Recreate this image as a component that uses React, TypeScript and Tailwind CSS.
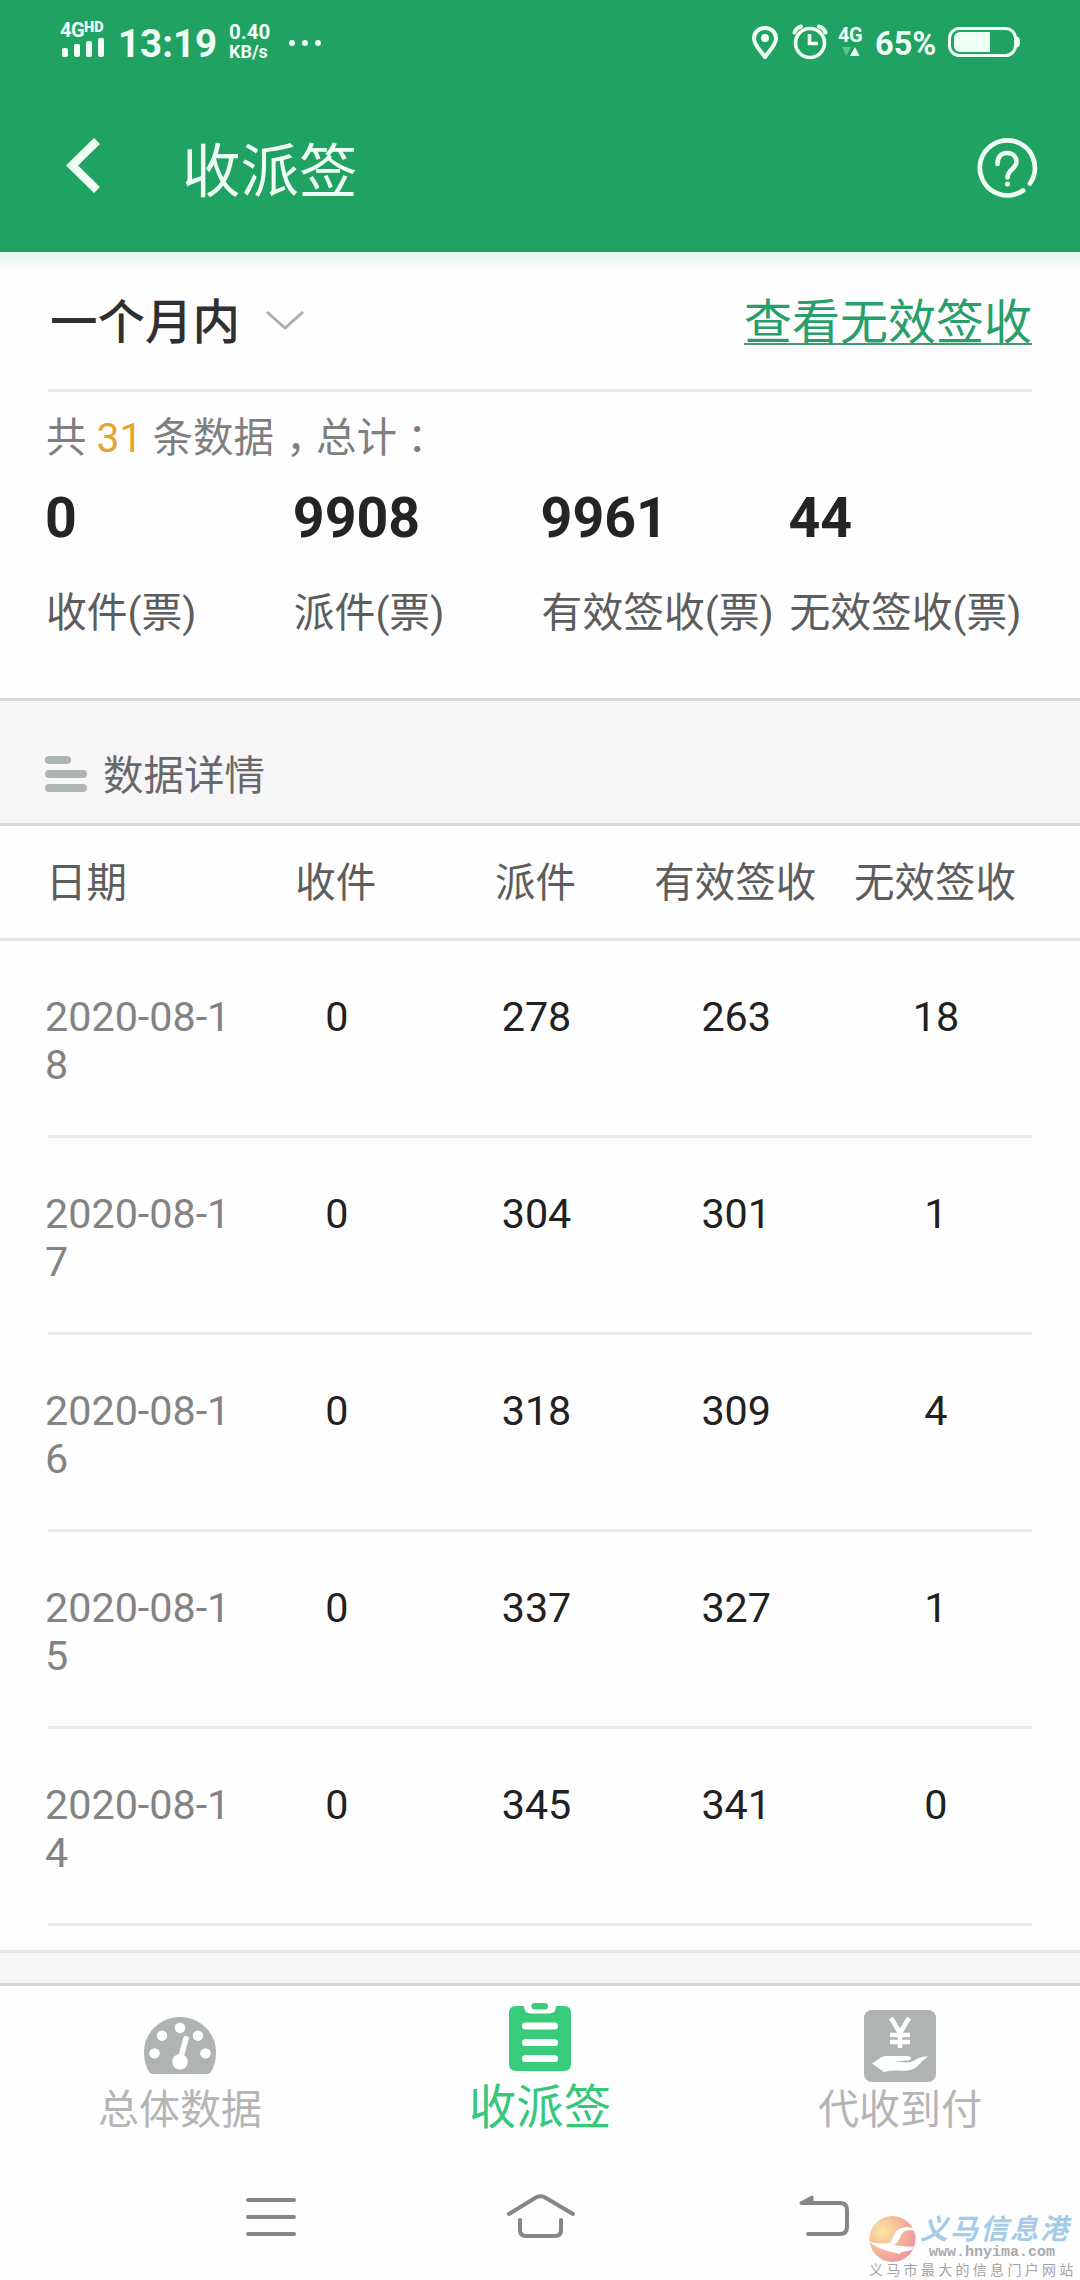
import type { ReactNode } from "react";

const summary = [
  { value: "0", label: "收件(票)" },
  { value: "9908", label: "派件(票)" },
  { value: "9961", label: "有效签收(票)" },
  { value: "44", label: "无效签收(票)" },
];

const rows = [
  ["2020-08-18", "0", "278", "263", "18"],
  ["2020-08-17", "0", "304", "301", "1"],
  ["2020-08-16", "0", "318", "309", "4"],
  ["2020-08-15", "0", "337", "327", "1"],
  ["2020-08-14", "0", "345", "341", "0"],
];

function StatusBar() {
  return (
    <div className="flex h-[86px] items-start justify-between pl-[60px] pr-[60px] font-bold leading-none text-[#f0fff6]">
      <div className="flex">
        <div className="mt-[20px] w-[58px]">
          <div className="flex h-[18px] items-start leading-none">
            <span className="text-[20px] leading-[20px] tracking-[-0.5px]">4G</span>
            <span className="mt-[1px] text-[14.500px] font-black leading-[13px]">HD</span>
          </div>
          <div className="ml-[2px] flex h-[19px] items-end gap-[6px]">
            <i className="h-[9px] w-[6px] rounded-[2px] bg-current" />
            <i className="h-[13px] w-[6px] rounded-[2px] bg-current" />
            <i className="h-[16px] w-[6px] rounded-[2px] bg-current" />
            <i className="h-[19px] w-[6px] rounded-[2px] bg-current" />
          </div>
        </div>
        <span className="mt-[24px] w-[111px] text-[38.5px] leading-[40px]">13:19</span>
        <div className="mt-[23px] w-[60px]">
          <div className="text-[20.500px] leading-[19px]">0.40</div>
          <div className="text-[18px] font-bold leading-[20px]">KB/s</div>
        </div>
        <div className="mt-[40px] flex gap-[7px]">
          <i className="size-[6px] rounded-full bg-current" />
          <i className="size-[6px] rounded-full bg-current" />
          <i className="size-[6px] rounded-full bg-current" />
        </div>
      </div>
      <div className="flex">
        <svg className="mt-[24px] h-[38px] w-[41px]" viewBox="0 0 41 38" fill="none">
          <path d="M14 4C7.500 4 3 8.500 3 14.500c0 6.500 6.500 12 11 18.500 4.500-6.500 11-12 11-18.500C25 8.500 20.500 4 14 4Z" stroke="currentColor" strokeWidth="4" strokeLinejoin="round" />
          <circle cx="14" cy="14" r="4" fill="currentColor" />
        </svg>
        <svg className="mt-[24px] h-[38px] w-[46px]" viewBox="0 0 46 38" fill="none" stroke="currentColor">
          <circle cx="18" cy="19" r="14.500" strokeWidth="3.600" />
          <path d="M2.500 8.500Q4 4 9 2.500M33.500 8.500Q32 4 27 2.500" strokeWidth="4" strokeLinecap="round" />
          <path d="M17.500 10v9.500H26" strokeWidth="3.600" />
        </svg>
        <div className="mt-[25px] w-[37px]">
          <div className="h-[20px] text-[20px] leading-[20px] tracking-[-0.5px]">4G</div>
          <svg className="h-[12px] w-[28px]" viewBox="0 0 28 12">
            <path d="M4 2h9L8.500 11Z" fill="#58c58e" />
            <path d="M12 11h9.500L17 2Z" fill="currentColor" />
          </svg>
        </div>
        <span className="mt-[25px] w-[73px] text-[32.5px] leading-[38px]">65%</span>
        <svg className="mt-[26px] h-[32px] w-[72px]" viewBox="0 0 72 32" fill="none">
          <rect x="1.500" y="2.500" width="66" height="27" rx="10" stroke="currentColor" strokeWidth="3" />
          <path d="M12 6h30v20H12a6 6 0 0 1-6-6v-8a6 6 0 0 1 6-6Z" fill="currentColor" />
          <path d="M69 10.500q3 .5 3 5.500t-3 5.500Z" fill="currentColor" />
        </svg>
      </div>
    </div>
  );
}

function Header() {
  return (
    <div className="flex h-[166px] items-center pl-[66px] pr-[41px] text-[#f0fff6]">
      <svg className="mt-[-6px] h-[56px] w-[116px]" viewBox="0 0 116 56" fill="none">
        <path d="M31 3 6 27.500 31 52" stroke="currentColor" strokeWidth="8.500" />
      </svg>
      <h1 className="mt-[5px] flex-1 text-[58.500px] leading-[80px]">收派签</h1>
      <svg className="mt-[-3px] size-[66px]" viewBox="0 0 66 66" fill="none" stroke="currentColor" strokeLinecap="round">
        <path d="M57 48.500A27.500 27.500 0 1 0 50 55.500" strokeWidth="4.800" />
        <path d="M24.500 29c0-7 3.500-11 9.500-11s9.500 3.800 9.500 9c0 7-9 7-9 15.500" strokeWidth="4.600" />
        <circle cx="34.500" cy="49" r="2.500" fill="currentColor" stroke="none" />
      </svg>
    </div>
  );
}

function Tab({ icon, label, active }: { icon: ReactNode; label: string; active?: boolean }) {
  return (
    <div className="flex w-1/3 flex-col items-center">
      <div className="h-[96px]">{icon}</div>
      {active ? (
        <span className="text-[47.500px] leading-[52px] text-[#38c67b]">{label}</span>
      ) : (
        <span className="text-[41px] leading-[56px] text-[#b5b5b5]">{label}</span>
      )}
    </div>
  );
}

function GaugeIcon() {
  return (
    <svg className="mt-[31px] h-[57px] w-[72px]" viewBox="0 0 72 58" preserveAspectRatio="none">
      <path d="M36 0C56 0 72 16 72 36c0 8-2 15-5.500 20.500Q65.500 58 64 58H8Q6.500 58 5.500 56.500C2 51 0 44 0 36 0 16 16 0 36 0Z" fill="#afb3b2" />
      <g fill="#fff">
        <circle cx="10.500" cy="37" r="5.300" />
        <circle cx="18" cy="19" r="5.300" />
        <circle cx="36" cy="11" r="5.300" />
        <circle cx="54" cy="19" r="5.300" />
        <circle cx="61.500" cy="37" r="5.300" />
        <circle cx="36" cy="45.500" r="7.800" />
      </g>
      <path d="M36 44 42 22" stroke="#fff" strokeWidth="5.500" strokeLinecap="round" />
    </svg>
  );
}

function ClipboardIcon() {
  return (
    <svg className="mt-[16px] h-[70px] w-[62px]" viewBox="0 0 62 70" fill="none">
      <path d="M7 4h8q0 7.500 7 7.500h18q7 0 7-7.500h8q7 0 7 7v51q0 7-7 7H7q-7 0-7-7V11Q0 4 7 4Z" fill="#38cb79" />
      <rect x="22.500" y="1" width="16.500" height="6.500" rx="3.200" fill="#38cb79" />
      <path d="M16.500 24h29M16.500 40.500h29M16.500 56.500h29" stroke="#fff" strokeWidth="7" strokeLinecap="round" />
    </svg>
  );
}

function PayIcon() {
  return (
    <svg className="mt-[24px] h-[72px] w-[72px]" viewBox="0 0 72 72" fill="none">
      <rect width="72" height="72" rx="8" fill="#afb3b2" />
      <path d="m27 8 9 15 9-15M36 22v16M26 25h20M26 32h20" stroke="#fff" strokeWidth="4.600" />
      <path d="M8 53.500c6-3 8-7.500 15-7.500h20q4 0 4 2.500c0 1.500-2 2-5 2l-11 1 12 1c7 0 11-7 21-6-8 5-10 12.500-20 14-8 1-15-1-22 1l-1.500 1Z" fill="#fff" />
    </svg>
  );
}

function Watermark() {
  return (
    <div className="absolute bottom-0 right-0 h-[68px] w-[212px]">
      <svg className="absolute left-0 top-[3px] size-[48px]" viewBox="0 0 48 48">
        <defs>
          <radialGradient id="sun" cx="0.28" cy="0.32" r="0.75">
            <stop offset="0" stopColor="#fbe7a2" />
            <stop offset="0.5" stopColor="#f7bc98" />
            <stop offset="1" stopColor="#ec9a9c" />
          </radialGradient>
        </defs>
        <circle cx="24.500" cy="24" r="23" fill="url(#sun)" />
        <path d="M1 26c7 3 14 3 20 2 5-2 3-11 10-14 5-2 10-2 14-1l1 2.500c-6-1-10 0-12 3-3 5-3 9-8 11 5 2 14 2 20 2l-2 3.500c-5 1-9 1-13 4-8-3-22-4-30-13Z" fill="#fff" />
      </svg>
      <div className="absolute left-[52px] top-[1px] whitespace-nowrap text-[28px] font-bold italic leading-[34px] tracking-[2px] text-[#a5cbe8]">义马信息港</div>
      <div className="absolute left-[61px] top-[32px] whitespace-nowrap font-['Liberation_Mono',monospace] text-[15px] font-bold leading-[18px] text-[#a9abad]">www.hnyima.com</div>
      <div className="absolute left-[1px] top-[48px] whitespace-nowrap text-[14px] leading-[20px] tracking-[3.300px] text-[#a3a3a3]">义马市最大的信息门户网站</div>
    </div>
  );
}

export default function App() {
  return (
    <div className="relative h-[2280px] w-[1080px] overflow-hidden bg-[#fefefe] font-['Roboto','Noto_Sans_CJK_SC',sans-serif]">
      <header className="h-[252px] bg-[#1fa262]">
        <StatusBar />
        <Header />
      </header>
      <div className="h-[20px] bg-linear-to-b from-[#e6f3ed] to-[#fefefe]" />

      <section className="px-[48px]">
        <div className="flex h-[120px] items-start justify-between border-b-[3px] border-[#e9e9e9] pt-[19px]">
          <div className="flex items-center pl-[2px]">
            <span className="text-[47.500px] font-medium leading-[64px] text-[#303030]">一个月内</span>
            <svg className="ml-[25px] mt-[-4px] h-[22px] w-[40px]" viewBox="0 0 40 22" fill="none">
              <path d="m2 2 18 16L38 2" stroke="#adadad" strokeWidth="3" />
            </svg>
          </div>
          <div className="h-[54px] border-b-[2px] border-[#4b9475] text-[48px] leading-[64px] text-[#279f68]">查看无效签收</div>
        </div>
      </section>

      <section className="flex h-[306px] flex-col pl-[45px]">
        <div className="mt-[20px] flex h-[52px] items-center pl-[1px] text-[40.500px] leading-[52px] text-[#7f7f7f]">
          <span>共</span>
          <span className="mx-[10px] text-[41px] text-[#e8a32f]">31</span>
          <span>条数据</span>
          <span className="w-[42px] pl-[12px] [font-feature-settings:'halt']">，</span>
          <span>总计</span>
          <span className="pl-[10px] [font-feature-settings:'halt']">：</span>
        </div>
        <div className="mt-[18px] grid grid-cols-[repeat(4,247.800px)]">
          {summary.map((s) => (
            <div key={s.label}>
              <div className="text-[55.500px] font-bold leading-[73px] text-[#242424]">{s.value}</div>
              <div className="mt-[34px] whitespace-nowrap pl-[1px] text-[40.800px] leading-[48px] text-[#5d5d5d]">{s.label}</div>
            </div>
          ))}
        </div>
      </section>

      <section className="flex h-[128px] items-center border-y-[3px] border-[#d8d8d8] bg-[#f6f6f6] pl-[45px] pt-[24px]">
        <div className="flex w-[58px] flex-col gap-[6px]">
          <i className="h-[8px] w-[26px] rounded-[4px] bg-[#adb5b3]" />
          <i className="h-[8px] w-[42px] rounded-[4px] bg-[#adb5b3]" />
          <i className="h-[8px] w-[42px] rounded-[4px] bg-[#adb5b3]" />
        </div>
        <span className="mt-[4px] text-[40.500px] leading-[48px] text-[#68686b]">数据详情</span>
      </section>

      <section>
        <div className="grid h-[115px] grid-cols-[190px_repeat(4,199.700px)] items-center border-b-[3px] border-[#e6e6e6] pl-[46px] pt-[2px] text-center text-[40.500px] leading-[48px] text-[#5d5d5d]">
          <span className="text-left">日期</span>
          <span>收件</span>
          <span>派件</span>
          <span>有效签收</span>
          <span>无效签收</span>
        </div>
        <div className="px-[48px]">
          {rows.map((row) => (
            <div key={row[0]} className="flex h-[197px] border-b-[3px] border-[#e9e9e9] pt-[52px] text-[41.300px] leading-[48px] text-[#212121]">
              <div className="-ml-[3px] w-[192px] shrink-0 text-[#838383]">
                <div>{row[0].slice(0, 9)}</div>
                <div>{row[0].slice(9)}</div>
              </div>
              {row.slice(1).map((v, i) => (
                <span key={i} className="w-[199.700px] shrink-0 text-center">{v}</span>
              ))}
            </div>
          ))}
        </div>
      </section>

      <div className="mt-[24px] h-[36px] border-b-[3px] border-t-[3px] border-b-[#d6d6d6] border-t-[#e6e6e6] bg-[#f6f6f6]" />

      <nav className="flex h-[164px]">
        <Tab icon={<GaugeIcon />} label="总体数据" />
        <Tab icon={<ClipboardIcon />} label="收派签" active />
        <Tab icon={<PayIcon />} label="代收到付" />
      </nav>

      <div className="flex items-start pl-[244px] pt-[42px] text-[#868686]">
        <svg className="h-[50px] w-[262px]" viewBox="0 0 262 50" fill="none" stroke="currentColor" strokeWidth="4" strokeLinecap="round">
          <path d="M4 8h46M4 25h46M4 42h46" />
        </svg>
        <svg className="h-[50px] w-[290px]" viewBox="0 0 290 50" fill="none" stroke="currentColor" strokeWidth="4" strokeLinecap="round">
          <path d="M3 22 29 6q5.500-3.500 11 0l27 16M14 28v10q0 6 6 6h29q6 0 6-6V28" />
        </svg>
        <svg className="h-[50px] w-[56px]" viewBox="0 0 56 50" fill="none" stroke="currentColor" strokeWidth="4" strokeLinecap="round">
          <path d="M6 11h38q7 0 7 7v17q0 7-7 7H12" />
          <path d="m5 11 11-6v5Z" fill="currentColor" strokeWidth="3" strokeLinejoin="round" />
        </svg>
      </div>

      <Watermark />
    </div>
  );
}
